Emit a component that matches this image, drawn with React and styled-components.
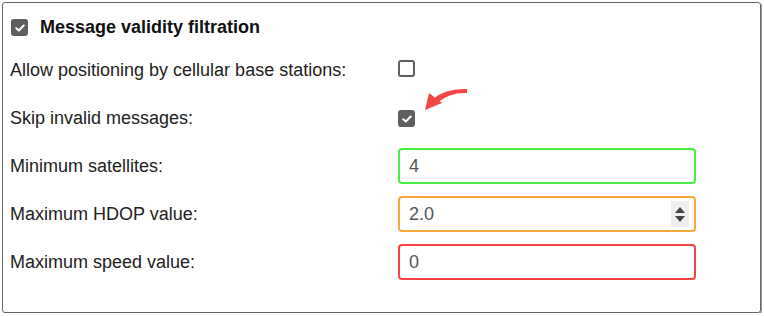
import React from 'react';
import styled, { createGlobalStyle } from 'styled-components';

const GlobalStyle = createGlobalStyle`
  html, body {
    margin: 0;
    padding: 0;
    background: #ffffff;
  }
  body {
    font-family: 'Liberation Sans', Arial, sans-serif;
    color: #222;
  }
`;

const Panel = styled.section`
  position: relative;
  box-sizing: border-box;
  margin: 2px 0 0 2px;
  width: 759px;
  height: 311px;
  border: 1px solid #666;
  border-radius: 3px;
  box-shadow: 1px 1px 0 #999;
  padding: 0 7px;
`;

const Header = styled.header`
  display: flex;
  align-items: center;
  gap: 12px;
  height: 49px;
  padding-left: 1px;
`;

const Title = styled.h2`
  margin: 0;
  font-size: 18px;
  font-weight: bold;
  color: #111;
`;

const Form = styled.div`
  display: grid;
  grid-template-columns: 388px 298px;
  grid-auto-rows: 36px;
  row-gap: 12px;
  align-items: center;
`;

const Label = styled.label`
  font-size: 18px;
  color: #222;
  padding-top: 1px;
`;

const Box = styled.span`
  box-sizing: border-box;
  width: 17px;
  height: 17px;
  border-radius: 3px;
  border: 2px solid #5f5f5f;
  background: ${p => (p.$checked ? '#5f5f5f' : '#fff')};
  display: inline-flex;
  align-items: center;
  justify-content: center;
`;

const Field = styled.div`
  box-sizing: border-box;
  height: 36px;
  display: flex;
  align-items: center;
  border: 2px solid ${p => p.$color};
  border-radius: 4px;
  padding: 0 5px 0 9px;
`;

const Value = styled.span`
  flex: 1;
  font-size: 18px;
  color: #555;
`;

const Spinner = styled.span`
  width: 18px;
  height: 26px;
  background: #eeeeee;
  display: flex;
  flex-direction: column;
  align-items: center;
  justify-content: center;
  gap: 3px;
`;

const Arrow = styled.svg`
  position: absolute;
  left: 413px;
  top: 80px;
`;

const Checkbox = ({ checked }) => (
  <Box $checked={checked}>
    {checked && (
      <svg width="10" height="8" viewBox="0 0 10 8">
        <path d="M1.3 4.2 L3.8 6.5 L8.7 1.5" fill="none" stroke="#fff" strokeWidth="2" strokeLinecap="round" strokeLinejoin="round" />
      </svg>
    )}
  </Box>
);

const Row = ({ label, children }) => (
  <>
    <Label>{label}</Label>
    <div>{children}</div>
  </>
);

const App = () => (
  <>
    <GlobalStyle />
    <Panel>
      <Header>
        <Checkbox checked />
        <Title>Message validity filtration</Title>
      </Header>
      <Form>
        <Row label="Allow positioning by cellular base stations:">
          <Checkbox />
        </Row>
        <Row label="Skip invalid messages:">
          <Checkbox checked />
        </Row>
        <Row label="Minimum satellites:">
          <Field $color="#44ee44"><Value>4</Value></Field>
        </Row>
        <Row label="Maximum HDOP value:">
          <Field $color="#f7a83c">
            <Value>2.0</Value>
            <Spinner>
              <svg width="10" height="6" viewBox="0 0 10 6"><path d="M0 6 L5 0 L10 6 Z" fill="#444" /></svg>
              <svg width="10" height="6" viewBox="0 0 10 6"><path d="M0 0 L5 6 L10 0 Z" fill="#444" /></svg>
            </Spinner>
          </Field>
        </Row>
        <Row label="Maximum speed value:">
          <Field $color="#f44444"><Value>0</Value></Field>
        </Row>
      </Form>
      <Arrow width="56" height="30" viewBox="0 0 56 30">
        <path d="M9 27 L13 10 L26 20 Z" fill="#f24646" />
        <path d="M17 16 Q30 5 51 6 L51 10 Q35 9 22 19 Z" fill="#f24646" />
      </Arrow>
    </Panel>
  </>
);

export default App;
